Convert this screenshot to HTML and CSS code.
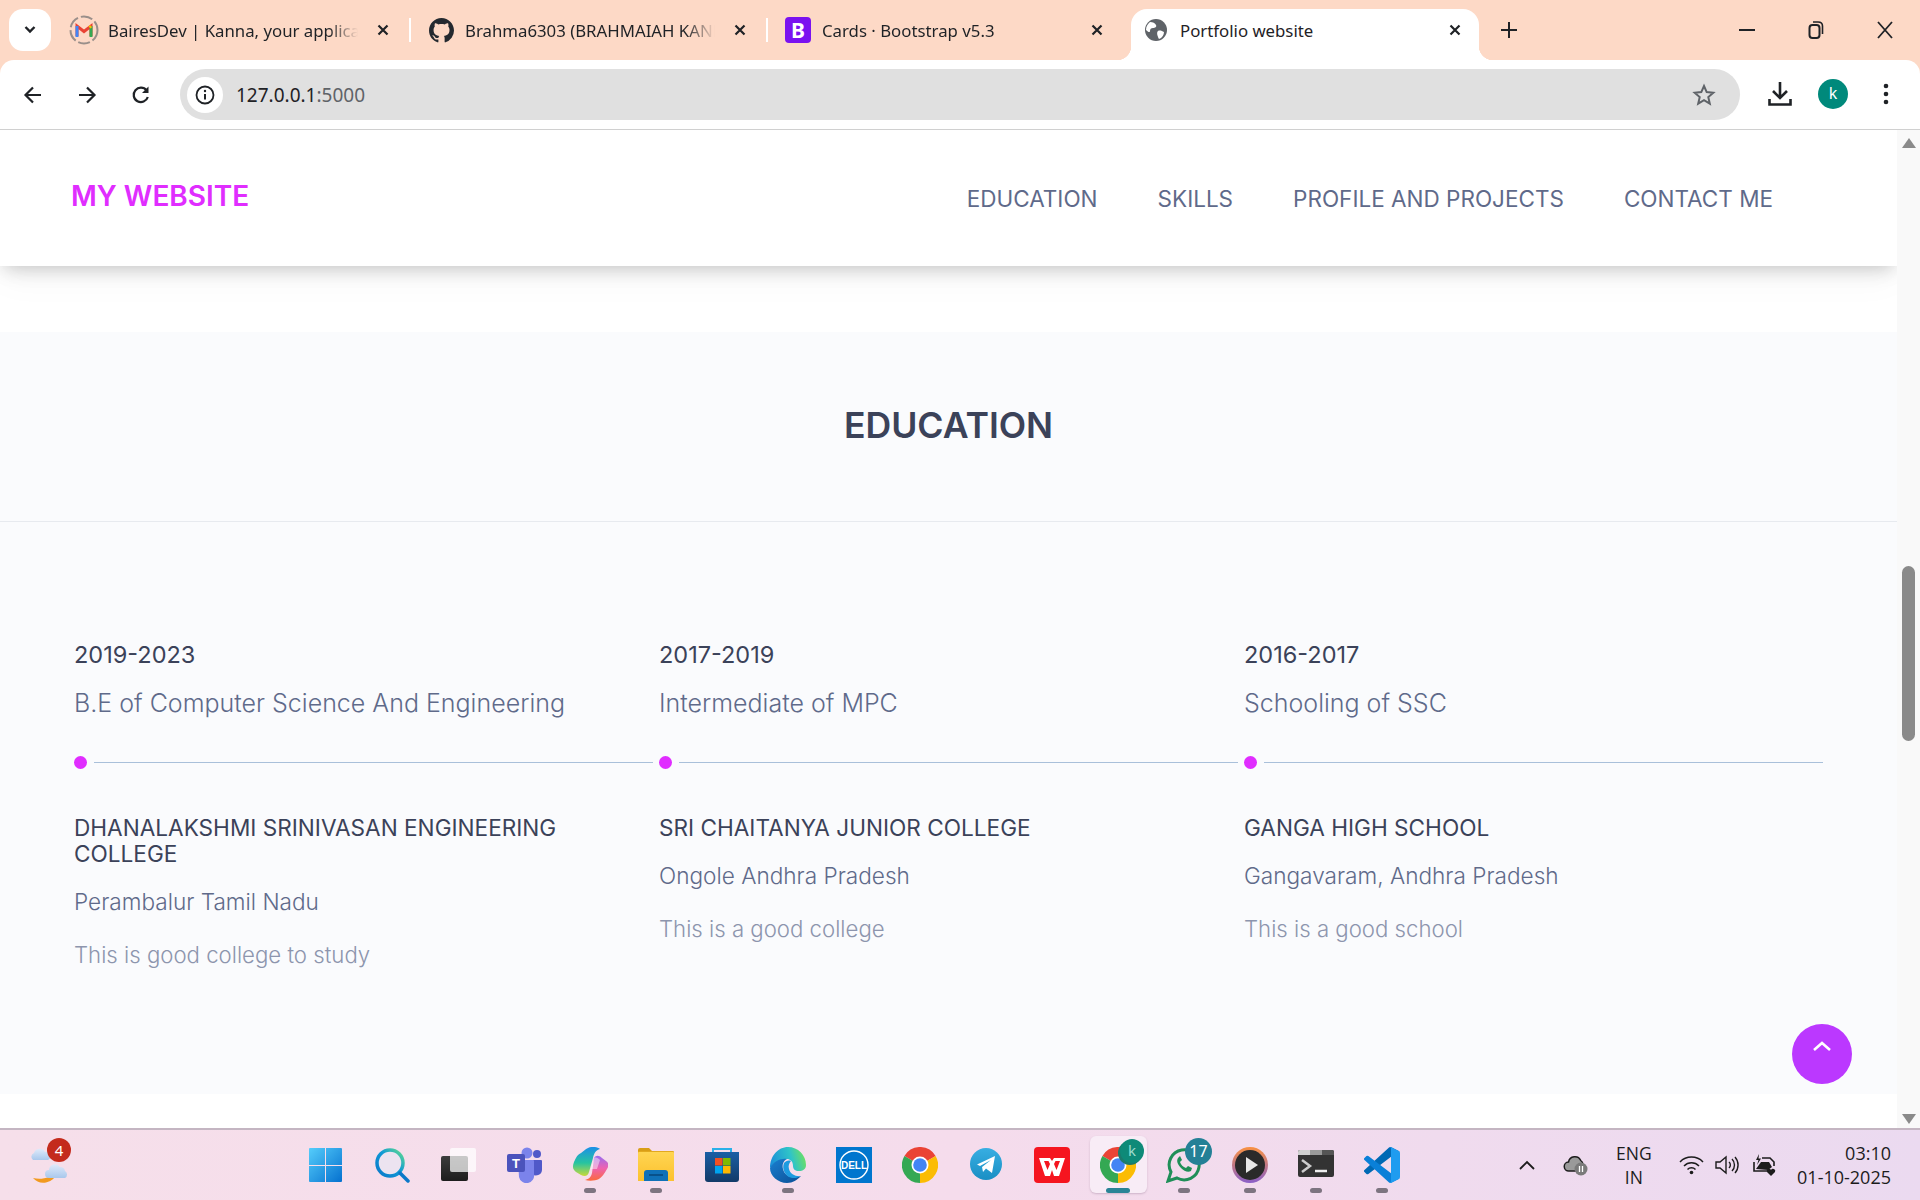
FILE: index.html
```html
<!DOCTYPE html>
<html lang="en">
<head>
    <meta charset="UTF-8">
    <title>Portfolio website</title>
    <link rel="stylesheet" href="styles.css">
</head>
<body>
    <!-- browser tabs -->
    <div class="tabstrip">
        <div class="tab-search">
            <svg width="14" height="10" viewBox="0 0 14 10"><path d="M2.5 2l4.5 4.5L11.5 2" fill="none" stroke="#1f2226" stroke-width="2.4"/></svg>
        </div>
        <div class="tab">
            <span class="tab-icon">
                <svg width="30" height="30" viewBox="0 0 30 30">
                    <circle cx="15" cy="15" r="13.5" fill="none" stroke="#9a8f8a" stroke-width="2" stroke-dasharray="12 3"/>
                    <path d="M8 21V11l7 5.5L22 11v10" fill="none" stroke="#ea4335" stroke-width="3"/>
                    <path d="M8 22V11" stroke="#4285f4" stroke-width="3"/>
                    <path d="M22 22V11" stroke="#34a853" stroke-width="3"/>
                    <path d="M20.5 12.5L22 11" stroke="#fbbc04" stroke-width="3"/>
                </svg>
            </span>
            <span class="tab-title">BairesDev | Kanna, your application</span>
            <span class="tab-close"><svg width="12" height="12" viewBox="0 0 12 12"><path d="M1.5 1.5l9 9M10.5 1.5l-9 9" stroke="#1f2226" stroke-width="2.2"/></svg></span>
        </div>
        <div class="tab">
            <span class="tab-icon">
                <svg width="25" height="25" viewBox="0 0 16 16"><path fill="#24292f" d="M8 0C3.58 0 0 3.58 0 8c0 3.54 2.29 6.53 5.47 7.59.4.07.55-.17.55-.38 0-.19-.01-.82-.01-1.49-2.01.37-2.53-.49-2.69-.94-.09-.23-.48-.94-.82-1.13-.28-.15-.68-.52-.01-.53.63-.01 1.08.58 1.23.82.72 1.21 1.87.87 2.33.66.07-.52.28-.87.51-1.07-1.78-.2-3.64-.89-3.64-3.95 0-.87.31-1.59.82-2.15-.08-.2-.36-1.02.08-2.12 0 0 .67-.21 2.2.82.64-.18 1.32-.27 2-.27s1.36.09 2 .27c1.53-1.04 2.2-.82 2.2-.82.44 1.1.16 1.92.08 2.12.51.56.82 1.27.82 2.15 0 3.07-1.87 3.75-3.65 3.95.29.25.54.73.54 1.48 0 1.07-.01 1.93-.01 2.2 0 .21.15.46.55.38A8.01 8.01 0 0 0 16 8c0-4.42-3.58-8-8-8z"/></svg>
            </span>
            <span class="tab-title">Brahma6303 (BRAHMAIAH KANNA)</span>
            <span class="tab-close"><svg width="12" height="12" viewBox="0 0 12 12"><path d="M1.5 1.5l9 9M10.5 1.5l-9 9" stroke="#1f2226" stroke-width="2.2"/></svg></span>
        </div>
        <div class="tab tab-last">
            <span class="tab-icon"><span class="bs-logo">B</span></span>
            <span class="tab-title">Cards · Bootstrap v5.3</span>
            <span class="tab-close"><svg width="12" height="12" viewBox="0 0 12 12"><path d="M1.5 1.5l9 9M10.5 1.5l-9 9" stroke="#1f2226" stroke-width="2.2"/></svg></span>
        </div>
        <div class="tab tab-active">
            <span class="tab-icon">
                <svg width="22" height="22" viewBox="0 0 22 22">
                    <circle cx="11" cy="11" r="11" fill="#5f6368"/>
                    <path d="M5 3c3 0 5 1 6 3s-1 3-3 3-3 1-3 3-2 1-4-1c0-4 2-6 4-8zM13 12c2-1 4 0 6 1 0 3-2 6-5 7-1-2-3-6-1-8z" fill="#fff"/>
                </svg>
            </span>
            <span class="tab-title">Portfolio website</span>
            <span class="tab-close"><svg width="12" height="12" viewBox="0 0 12 12"><path d="M1.5 1.5l9 9M10.5 1.5l-9 9" stroke="#1f2226" stroke-width="2.2"/></svg></span>
        </div>
        <div class="tab-new"><svg width="16" height="16" viewBox="0 0 16 16"><path d="M8 0v16M0 8h16" stroke="#1f2226" stroke-width="2"/></svg></div>
        <div class="win-controls">
            <svg width="16" height="16" viewBox="0 0 16 16"><path d="M0 8h16" stroke="#1f2226" stroke-width="2"/></svg>
            <svg width="16" height="20" viewBox="0 0 16 20"><rect x="1.5" y="5" width="10" height="13" rx="3" fill="none" stroke="#1f2226" stroke-width="2"/><path d="M5 2h5c3 0 4.5 1.500 4.500 4v8" fill="none" stroke="#1f2226" stroke-width="1.6"/></svg>
            <svg width="16" height="20" viewBox="0 0 16 20"><path d="M1 2l14 16M15 2L1 18" stroke="#1f2226" stroke-width="1.8"/></svg>
        </div>
    </div>

    <!-- address bar -->
    <div class="toolbar">
        <div class="nav-btns">
            <svg width="20" height="20" viewBox="0 0 20 20"><path d="M18 10H3M10 2.5L2.5 10l7.5 7.5" fill="none" stroke="#1f2226" stroke-width="2.2"/></svg>
            <svg width="20" height="20" viewBox="0 0 20 20"><path d="M2 10h15M10 2.5l7.500 7.500-7.500 7.500" fill="none" stroke="#1f2226" stroke-width="2.2"/></svg>
            <svg width="20" height="20" viewBox="0 0 20 20"><path d="M16.8 12a7.200 7.200 0 1 1-1.200-6.500" fill="none" stroke="#1f2226" stroke-width="2.2"/><path d="M17.5 1.5V8H11z" fill="#1f2226"/></svg>
        </div>
        <div class="omnibox">
            <span class="site-info">
                <svg width="20" height="20" viewBox="0 0 20 20"><circle cx="10" cy="10" r="8.5" fill="none" stroke="#1f2226" stroke-width="1.8"/><path d="M10 9v5.500" stroke="#1f2226" stroke-width="2"/><circle cx="10" cy="6" r="1.2" fill="#1f2226"/></svg>
            </span>
            <span class="url">127.0.0.1<span class="url-port">:5000</span></span>
            <svg class="star" width="24" height="24" viewBox="0 0 24 24"><path d="M12 3l2.700 6.100 6.600.6-5 4.400 1.500 6.500-5.800-3.400-5.800 3.400 1.500-6.500-5-4.400 6.600-.6z" fill="none" stroke="#5f6368" stroke-width="2"/></svg>
        </div>
        <div class="toolbar-right">
            <svg width="24" height="26" viewBox="0 0 24 26"><path d="M12 1v15M5 10l7 7 7-7" fill="none" stroke="#1f2226" stroke-width="2.6"/><path d="M1.500 18v5.500h21V18" fill="none" stroke="#1f2226" stroke-width="2.6"/></svg>
            <span class="avatar">k</span>
            <svg class="menu-dots" width="6" height="22" viewBox="0 0 6 22"><circle cx="3" cy="3" r="2.3" fill="#1f2226"/><circle cx="3" cy="11" r="2.3" fill="#1f2226"/><circle cx="3" cy="19" r="2.3" fill="#1f2226"/></svg>
        </div>
    </div>

    <div class="viewport">
        <div class="page">
            <header class="site-header">
                <a class="logo">MY WEBSITE</a>
                <nav class="site-nav">
                    <a>EDUCATION</a>
                    <a>SKILLS</a>
                    <a>PROFILE AND PROJECTS</a>
                    <a>CONTACT ME</a>
                </nav>
            </header>

            <section class="education">
                <h2 class="section-title">EDUCATION</h2>
                <hr class="section-rule">
                <div class="timeline">
                    <div class="edu-item">
                        <div class="edu-year">2019-2023</div>
                        <div class="edu-degree">B.E of Computer Science And Engineering</div>
                        <div class="edu-mark"><span class="edu-dot"></span><span class="edu-line"></span></div>
                        <h3 class="edu-college">DHANALAKSHMI SRINIVASAN ENGINEERING COLLEGE</h3>
                        <div class="edu-place">Perambalur Tamil Nadu</div>
                        <div class="edu-note">This is good college to study</div>
                    </div>
                    <div class="edu-item">
                        <div class="edu-year">2017-2019</div>
                        <div class="edu-degree">Intermediate of MPC</div>
                        <div class="edu-mark"><span class="edu-dot"></span><span class="edu-line"></span></div>
                        <h3 class="edu-college">SRI CHAITANYA JUNIOR COLLEGE</h3>
                        <div class="edu-place">Ongole Andhra Pradesh</div>
                        <div class="edu-note">This is a good college</div>
                    </div>
                    <div class="edu-item">
                        <div class="edu-year">2016-2017</div>
                        <div class="edu-degree">Schooling of SSC</div>
                        <div class="edu-mark"><span class="edu-dot"></span><span class="edu-line"></span></div>
                        <h3 class="edu-college">GANGA HIGH SCHOOL</h3>
                        <div class="edu-place">Gangavaram, Andhra Pradesh</div>
                        <div class="edu-note">This is a good school</div>
                    </div>
                </div>
            </section>

            <a class="back-top">
                <svg width="20" height="12" viewBox="0 0 20 12"><path d="M2 10l8-7 8 7" fill="none" stroke="#fff" stroke-width="2.6"/></svg>
            </a>
        </div>
        <div class="scrollbar">
            <span class="arrow-up"></span>
            <span class="thumb"></span>
            <span class="arrow-down"></span>
        </div>
    </div>

    <!-- windows taskbar -->
    <div class="taskbar">
        <div class="weather">
            <svg width="40" height="44" viewBox="0 0 40 44">
                <defs><linearGradient id="cloud" x1="0" y1="0" x2="0" y2="1"><stop offset="0" stop-color="#dfeafa"/><stop offset="1" stop-color="#a9c8ec"/></linearGradient></defs>
                <path d="M29 19a14 14 0 0 1-24 6c8 2 18 0 24-6z" fill="#f29a1f" transform="translate(0 10)"/>
                <path d="M5 17a4 4 0 0 1 1-7 6 6 0 0 1 11-1 4 4 0 0 1 3 8z" fill="url(#cloud)"/>
                <path d="M21 35a4 4 0 0 1 0-8 6 6 0 0 1 11-3 5 5 0 0 1 5 4 4 4 0 0 1 0 7z" fill="url(#cloud)"/>
            </svg>
            <span class="weather-badge">4</span>
        </div>
        <div class="apps">
            <div class="app">
                <svg class="app-icon" viewBox="0 0 36 36"><defs><linearGradient id="win" x1="0" y1="0" x2="1" y2="1"><stop offset="0" stop-color="#55cdfb"/><stop offset="1" stop-color="#0571cf"/></linearGradient></defs><path d="M1 2a1 1 0 0 1 1-1h15v17H1zM18 1h15a1 1 0 0 1 1 1v16H18zM1 19h16v16H2a1 1 0 0 1-1-1zM18 19h16v15a1 1 0 0 1-1 1H18z" fill="url(#win)"/></svg>
            </div>
            <div class="app">
                <svg class="app-icon" viewBox="0 0 36 36"><defs><linearGradient id="srch" x1="0" y1="1" x2="1" y2="0"><stop offset="0" stop-color="#0b78c9"/><stop offset=".55" stop-color="#0f9ad6"/><stop offset="1" stop-color="#63dc8c"/></linearGradient></defs><circle cx="16" cy="16" r="13" fill="#ece3f0" stroke="url(#srch)" stroke-width="3.5"/><path d="M26 26l8 8" stroke="#0b78c9" stroke-width="3.5" stroke-linecap="round"/></svg>
            </div>
            <div class="app">
                <svg class="app-icon" viewBox="0 0 36 36"><defs><linearGradient id="tv" x1="0" y1="0" x2="0" y2="1"><stop offset="0" stop-color="#3c3c3c"/><stop offset="1" stop-color="#1d1d1d"/></linearGradient></defs><rect x="1" y="9" width="27" height="25" rx="2" fill="url(#tv)"/><rect x="10" y="1" width="26" height="24" rx="2" fill="#fff" opacity=".72"/></svg>
            </div>
            <div class="app">
                <svg class="app-icon" viewBox="0 0 36 36"><circle cx="21" cy="6" r="5.5" fill="#7b83eb"/><circle cx="31" cy="7" r="4" fill="#5059c9"/><path d="M26 13h9a1 1 0 0 1 1 1v9a6 6 0 0 1-10 4z" fill="#5059c9"/><path d="M12 13h15a1 1 0 0 1 1 1v13a7.500 7.500 0 0 1-15 3z" fill="#7b83eb"/><rect x="1" y="7" width="18" height="18" rx="2" fill="#4b53bc"/><text x="10" y="21" class="teams-t">T</text></svg>
            </div>
            <div class="app running">
                <svg class="app-icon" viewBox="0 0 36 36"><defs><linearGradient id="cop1" x1="0" y1="0" x2="0" y2="1"><stop offset="0" stop-color="#1b8fe8"/><stop offset=".55" stop-color="#27c4a0"/><stop offset="1" stop-color="#c9d93a"/></linearGradient><linearGradient id="cop2" x1="0" y1="0" x2="0" y2="1"><stop offset="0" stop-color="#9a6cf0"/><stop offset=".5" stop-color="#ee62b0"/><stop offset="1" stop-color="#fb6a3c"/></linearGradient></defs><path d="M16 1c4-2 10-1 12 1-4 1-6 4-7 9l-4 14c-1 4-4 5-8 3l-5-3c-3-2-4-5-2-10 2-5 4-8 7-9 3-2 4-4 7-5z" fill="url(#cop1)"/><path d="M22 11c2-3 5-3 8 0l4 3c3 2 3 5 1 8-3 5-5 8-8 10-4 2-10 2-14 1 4-1 6-3 7-7z" fill="url(#cop2)"/><path d="M22 11c-1 3-2 7-3 11h6l3-9c-2-2-4-3-6-2z" fill="#fff" opacity=".45"/></svg>
            </div>
            <div class="app running">
                <svg class="app-icon" viewBox="0 0 36 36"><defs><linearGradient id="fold" x1="0" y1="0" x2="0" y2="1"><stop offset="0" stop-color="#ffd552"/><stop offset="1" stop-color="#fcc12e"/></linearGradient></defs><path d="M0 3a2 2 0 0 1 2-2h9l4 4H0z" fill="#d99e16"/><rect x="0" y="4" width="36" height="30" rx="1" fill="#e2a91e"/><rect x="0" y="5" width="36" height="29" rx="1" fill="url(#fold)"/><path d="M6 34V26a3 3 0 0 1 3-3h18a3 3 0 0 1 3 3v8z" fill="#0f71b8"/><path d="M11 28h14" stroke="#07477b" stroke-width="1.5"/></svg>
            </div>
            <div class="app">
                <svg class="app-icon" viewBox="0 0 36 36"><defs><linearGradient id="bag" x1="0" y1="0" x2="0" y2="1"><stop offset="0" stop-color="#1a5fa5"/><stop offset="1" stop-color="#123a68"/></linearGradient></defs><path d="M9 7V2h18v5" fill="none" stroke="#2ab0e8" stroke-width="2"/><path d="M1 5h34v27a3 3 0 0 1-3 3H4a3 3 0 0 1-3-3z" fill="url(#bag)"/><rect x="11" y="11" width="7.500" height="7.500" fill="#f25022"/><rect x="19" y="11" width="7.500" height="7.500" fill="#7fba00"/><rect x="11" y="19" width="7.500" height="7.500" fill="#00a4ef"/><rect x="19" y="19" width="7.500" height="7.500" fill="#ffb900"/></svg>
            </div>
            <div class="app running">
                <svg class="app-icon" viewBox="0 0 36 36"><defs><linearGradient id="edge1" x1="0" y1=".6" x2="1" y2=".4"><stop offset="0" stop-color="#1b8fd8"/><stop offset=".6" stop-color="#2fc4c8"/><stop offset="1" stop-color="#6fe05e"/></linearGradient><linearGradient id="edge2" x1="0" y1="0" x2="1" y2="1"><stop offset="0" stop-color="#1a7fd0"/><stop offset="1" stop-color="#0c4f96"/></linearGradient></defs><path d="M18 0c10 0 18 8 18 18 0 4-3 6-7 6s-6-2-6-5c0-5-3-7-6-7-7 0-13 4-17 9C0 9 8 0 18 0z" fill="url(#edge1)"/><path d="M0 21c4-7 11-10 17-9-4 2-5 6-4 10 2 8 10 10 18 7-4 4-8 7-14 7C8 36 0 29 0 21z" fill="url(#edge2)"/><path d="M14 16c-2 5 0 11 5 14 4 2 8 1 12-1-5 1-11-2-12-7-1-3 0-6 2-8-3-1-5 0-7 2z" fill="#1d9be0"/></svg>
            </div>
            <div class="app">
                <svg class="app-icon" viewBox="0 0 36 36"><rect width="36" height="36" fill="#0076ce"/><circle cx="18" cy="18" r="14" fill="none" stroke="#fff" stroke-width="1.4"/><text x="18" y="21.500" class="dell-text">DELL</text></svg>
            </div>
            <div class="app">
                <svg class="app-icon" viewBox="0 0 36 36"><path d="M18 18L2.400 9A18 18 0 0 1 33.600 9z" fill="#ea4335"/><path d="M18 18L33.600 9A18 18 0 0 1 18 36z" fill="#fbbc04"/><path d="M18 18V36A18 18 0 0 1 2.400 9z" fill="#34a853"/><circle cx="18" cy="18" r="8.500" fill="#fff"/><circle cx="18" cy="18" r="6.800" fill="#4285f4"/></svg>
            </div>
            <div class="app">
                <svg class="app-icon" viewBox="0 0 36 36"><defs><linearGradient id="tg" x1="0" y1="0" x2="0" y2="1"><stop offset="0" stop-color="#37aee2"/><stop offset="1" stop-color="#1a8fc4"/></linearGradient></defs><circle cx="18" cy="17" r="16" fill="url(#tg)"/><path d="M9 17.500L27 9l-3 17-6-4.500-3 3.500-1-5 9-7-11 6z" fill="#fff"/></svg>
            </div>
            <div class="app">
                <svg class="app-icon" viewBox="0 0 36 36"><rect width="36" height="36" rx="4" fill="#f5151f"/><path d="M5 11h11l2 3 2-3h11l-6 18h-5l-2-6-2 6h-5z" fill="#fff"/><path d="M10 14l3.500 9 2.500-6-1.500-3zM26 14l-3.500 9-2.500-6 1.500-3z" fill="#f5151f"/></svg>
            </div>
            <div class="app active">
                <svg class="app-icon" viewBox="0 0 36 36"><path d="M18 18L2.400 9A18 18 0 0 1 33.600 9z" fill="#ea4335"/><path d="M18 18L33.600 9A18 18 0 0 1 18 36z" fill="#fbbc04"/><path d="M18 18V36A18 18 0 0 1 2.400 9z" fill="#34a853"/><circle cx="18" cy="18" r="8.500" fill="#fff"/><circle cx="18" cy="18" r="6.800" fill="#4285f4"/></svg>
                <span class="chrome-badge">k</span>
            </div>
            <div class="app running">
                <svg class="app-icon" viewBox="0 0 36 36"><path d="M2 34l3-9A15 15 0 1 1 11 31z" fill="none" stroke="#1f8f58" stroke-width="3"/><path d="M12 11c-2 3 0 7 3 10s7 5 10 3l1-3-4-2-2 2c-3-1-5-3-6-6l2-2-2-4z" fill="#1f8f58"/></svg>
                <span class="wa-badge">17</span>
            </div>
            <div class="app running">
                <svg class="app-icon" viewBox="0 0 36 36"><defs><linearGradient id="play" x1="0" y1="0" x2="0" y2="1"><stop offset="0" stop-color="#f99141"/><stop offset="1" stop-color="#8a5fc8"/></linearGradient></defs><circle cx="18" cy="18" r="18" fill="url(#play)"/><circle cx="18" cy="18" r="15" fill="#2a2a2a"/><path d="M14 10l12 8-12 8z" fill="#e8e8e8"/></svg>
            </div>
            <div class="app running">
                <svg class="app-icon" viewBox="0 0 36 36"><rect x="0" y="3" width="36" height="27" rx="2" fill="#333"/><path d="M0 5a2 2 0 0 1 2-2h10v5H0z" fill="#cfcfcf"/><rect x="12" y="3" width="12" height="5" fill="#9a9a9a"/><path d="M24 3h10a2 2 0 0 1 2 2v3H24z" fill="#555"/><path d="M4 13l8 6-8 6" fill="none" stroke="#ccc" stroke-width="2.5"/><path d="M17 24h12" stroke="#eee" stroke-width="2.5"/></svg>
            </div>
            <div class="app running">
                <svg class="app-icon" viewBox="0 0 100 100"><path d="M96.46 10.8L75.86.88a6.23 6.23 0 0 0-7.11 1.2L1.3 63.58a4.17 4.17 0 0 0 0 6.16l5.51 5.01a4.17 4.17 0 0 0 5.32.24l81.23-61.62c2.73-2.07 6.64-.12 6.64 3.3v-.24a6.25 6.25 0 0 0-3.54-5.63z" fill="#0069b4"/><path d="M96.46 89.2l-20.6 9.92a6.23 6.23 0 0 1-7.11-1.2L1.3 36.42a4.17 4.17 0 0 1 0-6.16l5.51-5.01a4.17 4.17 0 0 1 5.32-.24l81.23 61.62c2.73 2.07 6.64.12 6.64-3.3v.24a6.25 6.25 0 0 1-3.54 5.63z" fill="#0a80d8"/><path d="M75.86 99.13a6.23 6.23 0 0 1-7.11-1.21c2.31 2.31 6.25.67 6.25-2.59V4.67c0-3.26-3.94-4.9-6.25-2.59a6.23 6.23 0 0 1 7.11-1.21l20.6 9.91A6.25 6.25 0 0 1 100 16.41v67.18a6.25 6.25 0 0 1-3.54 5.63z" fill="#1f9cf0"/></svg>
            </div>
        </div>
        <div class="tray">
            <svg class="tray-chevron" width="16" height="10" viewBox="0 0 16 10"><path d="M1 9l7-7 7 7" fill="none" stroke="#1c1c1c" stroke-width="1.8"/></svg>
            <svg class="tray-cloud" width="26" height="22" viewBox="0 0 26 22"><path d="M6 17a4.500 4.500 0 0 1-.5-9 6.500 6.500 0 0 1 12.300-1.500A5 5 0 0 1 20 11v6z" fill="#9a9a9a" stroke="#1c1c1c" stroke-width="1.5"/><circle cx="18" cy="15" r="6.500" fill="#7a7a7a"/><path d="M16.500 12v6M19.500 12v6" stroke="#fff" stroke-width="1.3"/></svg>
            <div class="tray-lang"><span>ENG</span><span>IN</span></div>
            <svg class="tray-wifi" width="25" height="20" viewBox="0 0 25 20"><path d="M1 7a16 16 0 0 1 23 0M5 11a10.500 10.500 0 0 1 15 0M8.500 14.500a5.500 5.500 0 0 1 8 0" fill="none" stroke="#1c1c1c" stroke-width="1.5"/><circle cx="12.500" cy="17.500" r="1.800" fill="#1c1c1c"/></svg>
            <svg class="tray-vol" width="25" height="20" viewBox="0 0 25 20"><path d="M1 7v6h4l6 5V2L5 7z" fill="none" stroke="#1c1c1c" stroke-width="1.4"/><path d="M14 7a4 4 0 0 1 0 6M17 4a8.500 8.500 0 0 1 0 12M20 2a12 12 0 0 1 0 16" fill="none" stroke="#1c1c1c" stroke-width="1.4"/></svg>
            <svg class="tray-batt" width="25" height="24" viewBox="0 0 25 24"><path d="M7 1L4 7h2.500L5 12l4-6.500H6.500z" fill="#1c1c1c"/><path d="M2 9v9h13M10 5h8l4 4v4" fill="none" stroke="#1c1c1c" stroke-width="1.6"/><path d="M4 16l5-7h8l3 5-4 3z" fill="#1c1c1c"/><path d="M19 23l-4-4a2.200 2.200 0 0 1 4-2 2.200 2.200 0 0 1 4 2z" fill="#1c1c1c"/></svg>
            <div class="tray-clock"><span>03:10</span><span>01-10-2025</span></div>
        </div>
    </div>
</body>
</html>
```

FILE: styles.css
```css
* {
    box-sizing: border-box;
}

html, body {
    margin: 0;
    height: 1200px;
    overflow: hidden;
}

body {
    display: flex;
    flex-direction: column;
    font-family: "Noto Sans", "Open Sans", sans-serif;
    color: #1f2226;
    background-color: #fdd9c6;
}

/* tabs */
.tabstrip {
    height: 60px;
    flex: none;
    display: flex;
    align-items: flex-start;
    padding: 9px 0 0 9px;
    background-color: #fdd9c6;
}

.tab-search {
    width: 42px;
    height: 42px;
    margin-right: 3px;
    border-radius: 14px;
    background-color: #fff;
    display: flex;
    justify-content: center;
    align-items: center;
}

.tab {
    width: 357px;
    height: 42px;
    padding: 0 18px 0 15px;
    display: flex;
    align-items: center;
    gap: 9px;
    position: relative;
    font-size: 16.8px;
}

.tab::after {
    content: "";
    position: absolute;
    right: 0;
    top: 9px;
    height: 24px;
    width: 2px;
    background-color: #fff;
}

.tab-last {
    width: 363px;
    padding-right: 24px;
}

.tab-last::after,
.tab-active::after {
    display: none;
}

.tab-active {
    width: 348px;
    height: 51px;
    padding: 0 14px 9px 10px;
    background-color: #fff;
    border-radius: 16px 16px 0 0;
}

.tab-active::before {
    content: "";
    position: absolute;
    left: -14px;
    bottom: 0;
    width: 14px;
    height: 14px;
    background: radial-gradient(circle at 0 0, #fdd9c6 14px, #fff 14.5px);
}

.tab-active::after {
    display: block;
    right: -14px;
    top: auto;
    bottom: 0;
    width: 14px;
    height: 14px;
    background: radial-gradient(circle at 100% 0, #fdd9c6 14px, #fff 14.5px);
}

.tab-icon {
    width: 30px;
    flex: none;
    display: flex;
    justify-content: center;
    align-items: center;
}

.tab-title {
    flex: 1;
    white-space: nowrap;
    overflow: hidden;
    -webkit-mask-image: linear-gradient(to right, #000 88%, transparent);
    mask-image: linear-gradient(to right, #000 88%, transparent);
}

.tab-active .tab-title {
    -webkit-mask-image: none;
    mask-image: none;
}

.tab-close {
    width: 20px;
    flex: none;
    display: flex;
    justify-content: center;
    margin-left: 6px;
}

.bs-logo {
    width: 26px;
    height: 26px;
    border-radius: 4px;
    background-color: #7a12f0;
    color: #fff;
    font-size: 21px;
    font-weight: 700;
    line-height: 26px;
    text-align: center;
}

.tab-new {
    width: 16px;
    margin: 13px 0 0 22px;
    display: flex;
}

.win-controls {
    margin: 11px 27px 0 auto;
    display: flex;
    align-items: center;
    gap: 53px;
}

/* toolbar */
.toolbar {
    height: 70px;
    flex: none;
    display: flex;
    align-items: flex-start;
    padding-top: 9px;
    background-color: #fff;
    border-radius: 14px 14px 0 0;
    border-bottom: 1px solid #d0d0d0;
}

.nav-btns {
    width: 180px;
    padding: 16px 0 0 23px;
    display: flex;
    gap: 34px;
}

.omnibox {
    width: 1560px;
    height: 51px;
    border-radius: 26px;
    background-color: #e0e0e0;
    display: flex;
    align-items: center;
    padding: 0 24px 0 7px;
}

.site-info {
    width: 36px;
    height: 36px;
    border-radius: 50%;
    background-color: #fff;
    display: flex;
    justify-content: center;
    align-items: center;
}

.url {
    margin-left: 13px;
    font-size: 19px;
    color: #1f2226;
}

.url-port {
    color: #5f6368;
}

.star {
    margin-left: auto;
}

.toolbar-right {
    flex: 1;
    padding: 10px 0 0 28px;
    display: flex;
    align-items: center;
}

.avatar {
    width: 30px;
    height: 30px;
    margin-left: 26px;
    border-radius: 50%;
    background-color: #00897b;
    color: #fff;
    font-size: 16px;
    line-height: 29px;
    text-align: center;
}

.menu-dots {
    margin-left: 35px;
}

/* page */
.viewport {
    height: 998px;
    flex: none;
    display: flex;
    background-color: #fff;
    overflow: hidden;
}

.page {
    width: 1897px;
    position: relative;
    font-family: Inter, "Noto Sans", sans-serif;
}

.site-header {
    height: 136px;
    padding: 0 124px 0 71px;
    display: flex;
    align-items: center;
    justify-content: space-between;
    background-color: #fff;
    box-shadow: 0 6px 18px -4px rgba(0, 0, 0, 0.22), 0 12px 36px rgba(0, 0, 0, 0.04);
    position: relative;
}

.logo {
    font-size: 28px;
    font-weight: 600;
    color: #e02dff;
    margin-top: -5px;
}

.site-nav {
    display: flex;
    gap: 60px;
    font-size: 22.5px;
    color: #5f6a8a;
}

.education {
    margin-top: 66px;
    padding: 72px 0 125px;
    background-color: #fafbfd;
}

.section-title {
    margin: 0;
    font-size: 35.6px;
    line-height: 44px;
    font-weight: 600;
    text-align: center;
    color: #3b4259;
}

.section-rule {
    margin: 73px 0 0;
    border: 0;
    border-top: 1px solid #e7eaef;
}

.timeline {
    margin-top: 118px;
    padding-left: 74px;
    display: grid;
    grid-template-columns: repeat(3, 585px);
}

.edu-year {
    font-size: 23.5px;
    line-height: 30px;
    color: #3b4259;
}

.edu-degree {
    margin-top: 18px;
    font-size: 25px;
    line-height: 30px;
    font-weight: 300;
    color: #5f6a8a;
}

.edu-mark {
    margin-top: 38px;
    padding-right: 6px;
    display: flex;
    align-items: center;
    gap: 7px;
}

.edu-dot {
    width: 13px;
    height: 13px;
    border-radius: 50%;
    background-color: #e02dff;
    flex: none;
}

.edu-line {
    flex: 1;
    height: 1px;
    background-color: #a9c0da;
}

.edu-college {
    margin: 46px 0 0;
    padding-right: 60px;
    font-size: 22.6px;
    line-height: 26px;
    font-weight: 400;
    color: #3b4259;
}

.edu-place {
    margin-top: 21px;
    font-size: 22.6px;
    line-height: 28px;
    font-weight: 300;
    color: #5f6a8a;
}

.edu-note {
    margin-top: 25px;
    font-size: 22.2px;
    line-height: 28px;
    font-weight: 300;
    color: #8d95ad;
}

.back-top {
    position: absolute;
    left: 1792px;
    top: 894px;
    width: 60px;
    height: 60px;
    border-radius: 50%;
    background-color: #bb38ff;
    display: flex;
    justify-content: center;
    padding-top: 16px;
}

/* scrollbar */
.scrollbar {
    flex: 1;
    background-color: #f9f9f9;
    position: relative;
}

.arrow-up,
.arrow-down {
    position: absolute;
    left: 5px;
    width: 0;
    height: 0;
    border-left: 7px solid transparent;
    border-right: 7px solid transparent;
}

.arrow-up {
    top: 8px;
    border-bottom: 10px solid #8a8a8a;
}

.arrow-down {
    bottom: 4px;
    border-top: 10px solid #8a8a8a;
}

.thumb {
    position: absolute;
    left: 5px;
    top: 436px;
    width: 13px;
    height: 175px;
    border-radius: 7px;
    background-color: #8a8a8a;
}

/* taskbar */
.taskbar {
    height: 72px;
    flex: none;
    display: flex;
    align-items: center;
    border-top: 2px solid #c4b5c2;
    background: linear-gradient(to right, #f6dfea, #f5dcec 50%, #ebdaf0);
}

.weather {
    width: 293px;
    padding-left: 28px;
    position: relative;
    display: flex;
}

.weather-badge {
    position: absolute;
    left: 47px;
    top: -5px;
    width: 24px;
    height: 24px;
    border-radius: 50%;
    background-color: #c42b1c;
    color: #fff;
    font-size: 15px;
    line-height: 24px;
    text-align: center;
}

.apps {
    display: flex;
}

.app {
    width: 66px;
    height: 70px;
    display: flex;
    justify-content: center;
    align-items: center;
    position: relative;
}

.app-icon {
    width: 36px;
    height: 36px;
}

.app.running::after,
.app.active::after {
    content: "";
    position: absolute;
    left: 27px;
    bottom: 7px;
    width: 12px;
    height: 5px;
    border-radius: 3px;
    background-color: #7d7480;
}

.app.active::before {
    content: "";
    position: absolute;
    left: 5px;
    right: 4px;
    top: 6px;
    bottom: 7px;
    border-radius: 6px;
    background-color: #f8ecf6;
    box-shadow: 0 1px 2px rgba(120, 90, 120, 0.3);
}

.app.active::after {
    left: 21px;
    bottom: 7px;
    width: 24px;
    background-color: #2a8496;
}

.app.active .app-icon {
    position: relative;
}

.teams-t {
    font-family: "Liberation Sans", sans-serif;
    font-size: 13px;
    font-weight: 700;
    fill: #fff;
    text-anchor: middle;
}

.dell-text {
    font-family: "Liberation Sans", sans-serif;
    font-size: 10px;
    font-weight: 700;
    fill: #fff;
    text-anchor: middle;
}

.chrome-badge {
    position: absolute;
    left: 35px;
    top: 9px;
    width: 24px;
    height: 24px;
    border-radius: 50%;
    background-color: #0e8a78;
    box-shadow: -2px 2px 0 #1c7a6c;
    color: #9fdccd;
    font-size: 15px;
    line-height: 23px;
    text-align: center;
}

.wa-badge {
    position: absolute;
    left: 34px;
    top: 8px;
    width: 27px;
    height: 27px;
    border-radius: 50%;
    background-color: #248096;
    color: #fff;
    font-size: 16px;
    line-height: 27px;
    text-align: center;
}

.tray {
    margin-left: 104px;
    flex: 1;
    padding-right: 29px;
    display: flex;
    align-items: center;
    color: #1c1c1c;
    font-family: "Open Sans", "Noto Sans", sans-serif;
}

.tray-cloud {
    margin-left: 28px;
}

.tray-lang,
.tray-clock {
    display: flex;
    flex-direction: column;
    line-height: 24px;
}

.tray-lang {
    margin-left: 27px;
    align-items: center;
    font-size: 17.5px;
}

.tray-wifi {
    margin-left: 27px;
}

.tray-vol {
    margin-left: 11px;
}

.tray-batt {
    margin-left: 12px;
}

.tray-clock {
    margin-left: auto;
    align-items: flex-end;
    font-size: 18px;
}
```
